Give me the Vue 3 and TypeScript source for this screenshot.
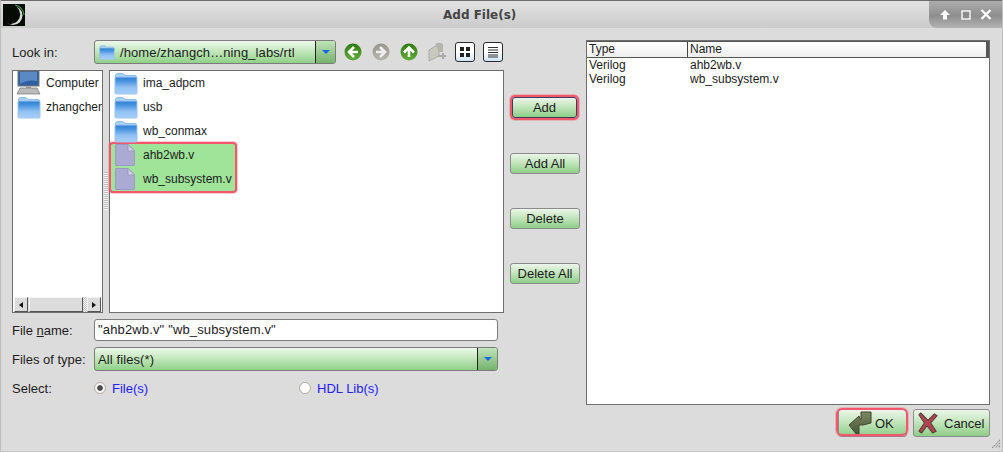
<script setup lang="ts">
const dirs = ['ima_adpcm', 'usb', 'wb_conmax']
const files = ['ahb2wb.v', 'wb_subsystem.v']
const rows = [
  { type: 'Verilog', name: 'ahb2wb.v' },
  { type: 'Verilog', name: 'wb_subsystem.v' },
]
const actions = ['Add', 'Add All', 'Delete', 'Delete All']
</script>

<template>
  <svg width="0" height="0" class="defs">
    <defs>
      <linearGradient id="fold" x1="0" y1="0" x2="0" y2="1">
        <stop offset="0" stop-color="#2c7fd0" />
        <stop offset="0.25" stop-color="#4a94df" />
        <stop offset="0.6" stop-color="#8fc0f2" />
        <stop offset="1" stop-color="#a9d0f7" />
      </linearGradient>
      <linearGradient id="navg" x1="0" y1="0" x2="0" y2="1">
        <stop offset="0" stop-color="#2f7a12" />
        <stop offset="1" stop-color="#62ad38" />
      </linearGradient>
      <linearGradient id="navd" x1="0" y1="0" x2="0" y2="1">
        <stop offset="0" stop-color="#97958d" />
        <stop offset="1" stop-color="#b8b6ae" />
      </linearGradient>
      <linearGradient id="okg" x1="0" y1="0" x2="0" y2="1">
        <stop offset="0" stop-color="#7d8a5e" />
        <stop offset="1" stop-color="#45503a" />
      </linearGradient>
      <symbol id="folder" viewBox="0 0 24 24">
        <path d="M1.5 4.5 Q1.5 2.5 3.5 2.5 H9 L11 4.5 H21 Q22.5 4.5 22.5 6 V8 H1.5 Z" fill="#a9cdf3" stroke="#8fbdec" />
        <rect x="1" y="6" width="22" height="17" rx="1" fill="url(#fold)" stroke="#9cc6f1" />
      </symbol>
      <symbol id="file" viewBox="0 0 20 22">
        <path d="M.5 .5 H13 L19.5 7 V21.5 H.5 Z" fill="#aaaad2" stroke="#9a9ac4" />
        <path d="M13 .5 V7 H19.5 Z" fill="#d4d2ea" stroke="#9a9ac4" />
      </symbol>
    </defs>
  </svg>
  <div class="window">
    <header class="titlebar">
      <svg class="logo" width="22" height="22" viewBox="0 0 22 22">
        <rect width="22" height="22" fill="#050a05" />
        <circle cx="10" cy="11.5" r="9.5" fill="#d8d8d8" />
        <circle cx="7.2" cy="10.2" r="10" fill="#050a05" />
        <path d="M12 1 A11 11 0 0 1 21 11" fill="none" stroke="#3d9a3d" stroke-width="1.2" />
      </svg>
      <span class="title">Add File(s)</span>
      <div class="wm">
        <svg width="12" height="10" viewBox="0 0 12 10"><path d="M6 0 L11 5 H8 V9.5 H4 V5 H1 Z" fill="#fff" /></svg>
        <svg width="10" height="10" viewBox="0 0 10 10"><rect x="1" y="1" width="8" height="8" fill="#8c8c8c" stroke="#eee" stroke-width="1.6" /></svg>
        <svg width="12" height="11" viewBox="0 0 12 11"><path d="M1.5 1 L10.5 10 M10.5 1 L1.5 10" stroke="#fff" stroke-width="2.4" /></svg>
      </div>
    </header>

    <div class="main">
      <section class="left">
        <div class="lookrow">
          <label class="lbl">Look in:</label>
          <div class="combo look">
            <svg class="cfold" width="16" height="16"><use href="#folder" /></svg>
            <span class="ctext">/home/zhangch…ning_labs/rtl</span>
            <span class="carrow"><i></i></span>
          </div>
          <div class="tools">
            <svg width="18" height="18" viewBox="0 0 18 18"><circle cx="9" cy="9" r="8.5" fill="url(#navg)" /><path d="M10 4 L5 9 L10 14 M5 9 H14" fill="none" stroke="#fff" stroke-width="2.6" /></svg>
            <svg width="18" height="18" viewBox="0 0 18 18"><circle cx="9" cy="9" r="8.5" fill="url(#navd)" /><path d="M8 4 L13 9 L8 14 M13 9 H4" fill="none" stroke="#eee" stroke-width="2.6" /></svg>
            <svg width="18" height="18" viewBox="0 0 18 18"><circle cx="9" cy="9" r="8.5" fill="url(#navg)" /><path d="M4 9.5 L9 4.5 L14 9.5 M9 5 V14" fill="none" stroke="#fff" stroke-width="2.6" /></svg>
            <svg width="18" height="20" viewBox="0 0 18 20"><path d="M1 8 L11 2 V14 L1 19 Z" fill="#c9c9c2" stroke="#aaa" /><path d="M7 2 L11 0.5 L15 2 V10 H11 Z" fill="#b5b5ae" /><path d="M11 13 H14 V11 H16 V13 H18 V15 H16 V17 H14 V15 H11 Z" fill="#aaa" /></svg>
            <span class="tbtn t1">
              <svg width="12" height="12" viewBox="0 0 12 12"><path d="M1 1 H5 V5 H1 Z M7 1 H11 V5 H7 Z M1 7 H5 V11 H1 Z M7 7 H11 V11 H7 Z" fill="#222" /></svg>
            </span>
            <span class="tbtn t2">
              <svg width="12" height="12" viewBox="0 0 12 12"><path d="M1 1.5 H11 M1 4 H11 M1 6.5 H11 M1 9 H11 M1 11 H11" stroke="#333" stroke-width="1.2" /></svg>
            </span>
          </div>
        </div>

        <div class="panes">
          <div class="side">
            <div class="sitem">
              <svg width="24" height="24" viewBox="0 0 24 24">
                <rect x="1" y="0" width="21" height="15" fill="#2f5f9f" stroke="#777" />
                <path d="M3 1 H20 V10 Q10 8 3 13 Z" fill="#5a8ac4" />
                <rect x="9" y="15" width="5" height="2" fill="#aaa" />
                <path d="M3 17 H20 L23 23 H0 Z" fill="#bbb" stroke="#666" stroke-width=".6" />
              </svg>
              <span>Computer</span>
            </div>
            <div class="sitem">
              <svg width="24" height="24"><use href="#folder" /></svg>
              <span>zhangchen</span>
            </div>
            <div class="hscroll">
              <span class="sbtn"><i class="tri l"></i></span>
              <span class="thumb"></span>
              <span class="hatch"></span>
              <span class="sbtn"><i class="tri r"></i></span>
            </div>
          </div>
          <div class="grip"></div>
          <div class="list">
            <div v-for="d in dirs" :key="d" class="litem">
              <svg width="24" height="24"><use href="#folder" /></svg>
              <span>{{ d }}</span>
            </div>
            <div class="sel">
              <div v-for="f in files" :key="f" class="litem">
                <svg width="20" height="22"><use href="#file" /></svg>
                <span>{{ f }}</span>
              </div>
            </div>
          </div>
        </div>

        <div class="frow first">
          <label class="lbl">File <u>n</u>ame:</label>
          <div class="input">"ahb2wb.v" "wb_subsystem.v"</div>
        </div>
        <div class="frow">
          <label class="lbl">Files of type:</label>
          <div class="combo type">
            <span class="ctext">All files(*)</span>
            <span class="carrow"><i></i></span>
          </div>
        </div>
        <div class="frow radios">
          <label class="lbl">Select:</label>
          <div class="radio one"><span class="dot on"></span><span>File(s)</span></div>
          <div class="radio"><span class="dot"></span><span>HDL Lib(s)</span></div>
        </div>
      </section>

      <section class="mid">
        <button v-for="(a, i) in actions" :key="a" class="btn" :class="{ mark: i === 0 }">{{ a }}</button>
      </section>

      <section class="right">
        <div class="thead">
          <span class="c1">Type</span>
          <span class="c2">Name</span>
        </div>
        <div v-for="r in rows" :key="r.name" class="trow">
          <span class="c1">{{ r.type }}</span>
          <span class="c2">{{ r.name }}</span>
        </div>
      </section>
    </div>

    <footer class="foot">
      <button class="btn big ok">
        <svg width="24" height="25" viewBox="0 0 24 25">
          <path d="M13 1 H23 V12 L15 14 H11 V23 L9 24 L1 14 L11 5 L12 8 H13 Z" fill="url(#okg)" stroke="#3e4530" stroke-width="1" stroke-linejoin="round" />
        </svg>
        <span>OK</span>
      </button>
      <button class="btn big cancel">
        <svg width="20" height="24" viewBox="0 0 22 24">
          <path d="M3 1 L11 9 L18 2 L21 4 L14 12 L20 21 L16 23 L10 15 L4 23 L1 21 L7 12 L1 3 Z" fill="#b2434f" stroke="#54403f" stroke-width="1.2" stroke-linejoin="round" />
        </svg>
        <span>Cancel</span>
      </button>
      <svg class="resize" width="10" height="10" viewBox="0 0 10 10">
        <path d="M9 1 L1 9 M9 4 L4 9 M9 7 L7 9" stroke="#8a8a8a" stroke-width="1.2" stroke-dasharray="1.4 1" />
      </svg>
    </footer>
  </div>
</template>

<style scoped>
.defs { position: absolute; }
svg { flex: none; }
.window {
  width: 1003px;
  height: 452px;
  box-sizing: border-box;
  background: #dcdcdc;
  border-left: 1px solid #bdbdbd;
  border-right: 1px solid #bdbdbd;
  border-bottom: 1px solid #c6c6c6;
  font-family: "Liberation Sans", Arial, sans-serif;
  font-size: 13px;
  color: #1c1c1c;
  position: relative;
  overflow: hidden;
}
.titlebar {
  height: 28px;
  box-sizing: border-box;
  border-top: 1px solid #6d6d6d;
  background: linear-gradient(#e2e2e2, #cbcbcb);
  display: flex;
  align-items: flex-start;
  position: relative;
}
.logo { margin: 3px 0 0 2px; }
.title {
  position: absolute;
  left: 442px;
  top: 7px;
  font-family: "DejaVu Sans", sans-serif;
  font-weight: 700;
  font-size: 12px;
  color: #444;
  line-height: 15px;
}
.wm {
  position: absolute;
  right: 0;
  top: 0;
  width: 73px;
  height: 27px;
  box-sizing: border-box;
  padding: 0 10px;
  display: flex;
  align-items: center;
  justify-content: space-between;
  background: linear-gradient(#adadad, #8e8e8e 55%, #b4b4b4);
  border-bottom-left-radius: 8px;
}
.main {
  display: flex;
  padding: 12px 12px 0 11px;
  height: 371px;
  box-sizing: border-box;
}
.left { width: 492px; flex: none; }
.lookrow { display: flex; align-items: center; height: 24px; }
.lbl { width: 82px; flex: none; }
.combo {
  display: flex;
  align-items: center;
  box-sizing: border-box;
  border: 1px solid #7c7c7c;
  border-radius: 3px;
  background: linear-gradient(#eef8ec, #c4e8bd 45%, #8fd088);
  position: relative;
  flex: none;
}
.look { width: 242px; height: 24px; padding-left: 4px; }
.cfold { margin-right: 5px; }
.ctext { flex: 1; white-space: nowrap; letter-spacing: .1px; }
.carrow {
  width: 19px;
  align-self: stretch;
  border-left: 1px solid #222;
  background: linear-gradient(#bfe3b8, #76b36e);
  display: flex;
  align-items: center;
  justify-content: center;
  border-radius: 0 2px 2px 0;
}
.carrow i {
  width: 0;
  height: 0;
  border-left: 4px solid transparent;
  border-right: 4px solid transparent;
  border-top: 4px solid #1668e8;
}
.tools { display: flex; align-items: center; gap: 10px; margin-left: 8px; }
.tbtn {
  width: 20px;
  height: 20px;
  box-sizing: border-box;
  border: 1px solid #2a2a2a;
  border-radius: 3px;
  background: linear-gradient(#fff 50%, #cfe3f5);
  display: flex;
  align-items: center;
  justify-content: center;
  flex: none;
}
.t1 { margin-left: -1px; }
.t2 { margin-left: -2px; }
.panes { display: flex; height: 243px; margin-top: 6px; }
.side {
  width: 91px;
  box-sizing: border-box;
  background: #fff;
  border: 1px solid #6e6e6e;
  position: relative;
  overflow: hidden;
  font-size: 12px;
  flex: none;
}
.sitem {
  display: flex;
  align-items: center;
  height: 24px;
  gap: 5px;
  padding-left: 4px;
  white-space: nowrap;
}
.hscroll {
  position: absolute;
  left: 1px;
  right: 1px;
  bottom: 0;
  height: 15px;
  display: flex;
  background: #dcdcdc;
}
.sbtn {
  width: 14px;
  box-sizing: border-box;
  border: 1px solid #f2f2f2;
  border-right-color: #555;
  border-bottom-color: #555;
  background: #dcdcdc;
  display: flex;
  align-items: center;
  justify-content: center;
  flex: none;
}
.tri { width: 0; height: 0; border-top: 3px solid transparent; border-bottom: 3px solid transparent; }
.tri.l { border-right: 4px solid #111; }
.tri.r { border-left: 4px solid #111; }
.thumb {
  width: 54px;
  margin-left: 1px;
  box-sizing: border-box;
  border: 1px solid #f4f4f4;
  border-right-color: #555;
  border-bottom-color: #555;
  background: #dcdcdc;
  flex: none;
}
.hatch {
  flex: 1;
  background: repeating-conic-gradient(#fff 0 25%, #bbb 0 50%) 0 0 / 2px 2px;
}
.grip {
  width: 6px;
  flex: none;
  background: repeating-linear-gradient(#bcbcbc 0 1px, #f6f6f6 1px 2px) 1px 102px / 4px 38px no-repeat;
}
.list {
  flex: 1;
  background: #fff;
  border: 1px solid #6e6e6e;
  box-sizing: border-box;
  font-size: 12px;
  position: relative;
}
.litem {
  display: flex;
  align-items: center;
  height: 24px;
  gap: 5px;
  padding-left: 4px;
  white-space: nowrap;
}
.sel {
  display: flex;
  flex-direction: column;
  width: 124px;
  height: 47px;
  margin: 1px 0 0 1px;
  background: #a0e49a;
  box-shadow: 0 0 0 2px #f4566c, 0 0 0 3px rgba(244, 86, 108, .3);
  border-radius: 2px;
}
.sel .litem { padding-left: 4px; gap: 8px; flex: none; }
.sel .litem:first-child { margin-top: -1px; }
.frow { display: flex; align-items: center; }
.first { margin-top: 6px; height: 22px; }
.frow + .frow { margin-top: 6px; height: 24px; }
.input {
  width: 404px;
  height: 22px;
  box-sizing: border-box;
  background: #fff;
  border: 1px solid #7c7c7c;
  border-radius: 3px;
  padding-left: 3px;
  line-height: 20px;
  letter-spacing: .15px;
  flex: none;
}
.type { width: 404px; height: 24px; padding-left: 3px; }
.frow.radios { margin-top: 8px; height: 18px; color: #1c1c1c; }
.radio { display: flex; align-items: center; gap: 6px; color: #2020ff; }
.radio.one { width: 205px; flex: none; }
.dot {
  width: 12px;
  height: 12px;
  box-sizing: border-box;
  border-radius: 50%;
  border: 1px solid #b3aca6;
  background: #fff;
  display: block;
}
.dot.on { background: radial-gradient(circle, #4a4a4a 0 2.4px, #f4f4f4 3.2px); }
.mid {
  width: 70px;
  margin: 57px 0 0 6px;
  display: flex;
  flex-direction: column;
  flex: none;
  gap: 34px;
}
.btn {
  height: 21px;
  box-sizing: border-box;
  padding: 0;
  border: 1px solid #8c8c8c;
  border-radius: 3px;
  background: linear-gradient(#ecf6ea, #c4e6be 45%, #8fce88);
  font: 13px "Liberation Sans", Arial, sans-serif;
  color: #1c1c1c;
  flex: none;
}
.btn.mark {
  box-shadow: 0 0 0 2px #f4566c, 0 0 0 3px rgba(244, 86, 108, .3);
  border-color: #3c3c5c;
  margin: 0 3px 1px 2px;
}
.right {
  width: 404px;
  height: 365px;
  margin-left: 6px;
  box-sizing: border-box;
  background: #fff;
  border: 1px solid #6e6e6e;
  font-size: 12px;
  flex: none;
}
.thead {
  display: flex;
  height: 17px;
  box-sizing: border-box;
  border-top: 1px solid #555;
  border-bottom: 1px solid #555;
  border-right: 3px solid #555;
  background: linear-gradient(#fff, #eee);
}
.thead .c1 { border-right: 1px solid #444; }
.c1 { width: 101px; padding-left: 2px; box-sizing: border-box; flex: none; }
.c2 { padding-left: 2px; }
.trow { display: flex; height: 14px; line-height: 14px; }
.thead span { line-height: 15px; }
.foot {
  display: flex;
  justify-content: flex-end;
  gap: 6px;
  padding-right: 12px;
  padding-top: 10px;
  position: relative;
}
.big {
  height: 28px;
  display: flex;
  align-items: center;
  position: relative;
}
.ok { width: 69px; padding-left: 9px; gap: 3px; }
.ok::after {
  content: "";
  position: absolute;
  left: -3px;
  right: -2px;
  top: -2px;
  bottom: 0;
  border: 2px solid #f4566c;
  border-radius: 6px;
  box-shadow: 0 0 0 1px rgba(244, 86, 108, .3);
}
.cancel { width: 77px; padding-left: 4px; gap: 6px; }
.resize { position: absolute; right: 1px; bottom: -12px; }
</style>

<style>
html, body { margin: 0; padding: 0; overflow: hidden; }
</style>
